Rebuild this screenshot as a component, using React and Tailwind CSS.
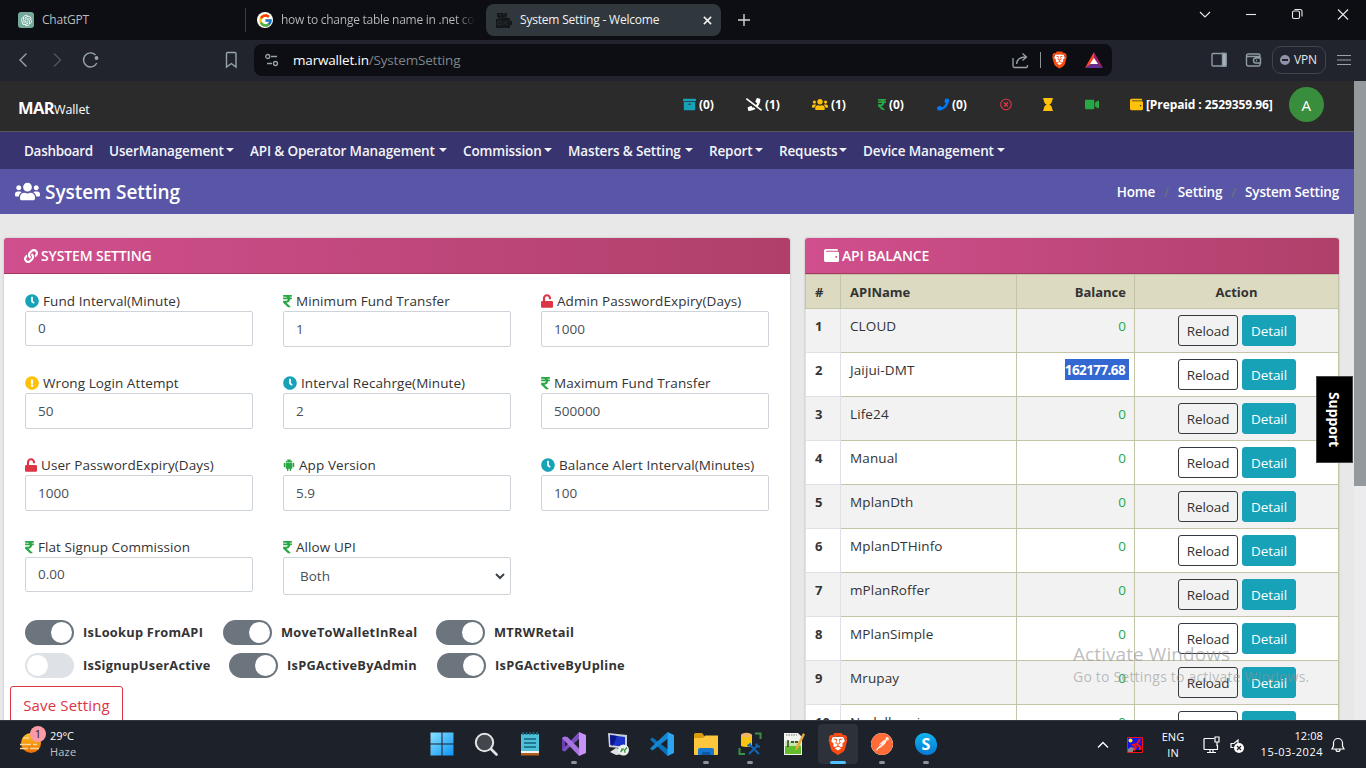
import React from "react";
import {
  FaArchive, FaPhoneSlash, FaUsers, FaRupeeSign, FaPhone, FaRegTimesCircle, FaHourglass, FaVideo,
  FaWallet, FaLink, FaClock, FaExclamationCircle, FaUnlock,
} from "react-icons/fa";
import { AiFillAndroid } from "react-icons/ai";
import { FcGoogle } from "react-icons/fc";
import { SiBrave, SiPostman } from "react-icons/si";
import { RiOpenaiFill } from "react-icons/ri";

/* ---------- Browser chrome ---------- */

function BraveLogo({ className }) {
  return (
    <span className={"relative flex items-center justify-center " + className}>
      <svg viewBox="0 0 24 24" className="absolute inset-0 h-full w-full">
        <path d="M6 4h12l2 6-2 8-6 4-6-4-2-8z" fill="#fff" />
      </svg>
      <SiBrave className="relative h-full w-full text-[#fb4a12]" />
    </span>
  );
}

function TabBar() {
  return (
    <div className="flex h-10 shrink-0 bg-[#0d0e13] text-[12px] leading-[40px] tracking-[-0.2px] whitespace-nowrap text-[#b9bbbe]">
      <div className="flex w-[246px] items-center pl-[18px]">
        <span className="flex h-4 w-4 items-center justify-center rounded-[3px] bg-[#74a99b] text-white">
          <RiOpenaiFill size={13} />
        </span>
        <span className="ml-2">ChatGPT</span>
        <span className="ml-auto h-6 w-px bg-[#3a3c42]" />
      </div>
      <div className="flex w-[240px] items-center pl-[11px]">
        <span className="flex h-4 w-4 shrink-0 items-center justify-center rounded-full bg-white">
          <FcGoogle size={15} />
        </span>
        <span className="ml-2 w-[194px] overflow-hidden bg-gradient-to-r from-[#b9bbbe] from-90% to-transparent bg-clip-text tracking-[-0.26px] text-transparent">
          how to change table name in .net core
        </span>
      </div>
      <div className="mt-1 flex h-8 w-[235px] items-center rounded-lg bg-[#30383d] pl-[10px] leading-8 text-[#f1f2f3]">
        <svg width="16" height="16" viewBox="0 0 16 16" fill="#14181b">
          <path d="M1 1h10v5h3v3h2v4h-2v3H0V7h2V5H1z" />
          <path d="M3 3h2M7 2h2M3 6h3M8 5h3M2 9v4h3V9zM8 9v4M9 11l3-2M9 11l3 2" fill="none" stroke="#262d31" />
        </svg>
        <span className="ml-2">System Setting - Welcome</span>
        <svg className="mr-[9px] ml-auto" width="9" height="9" viewBox="0 0 10 10" stroke="#f1f2f3" strokeWidth="1.7">
          <path d="M1 1l8 8M9 1l-8 8" />
        </svg>
      </div>
      <svg className="mt-[14px] ml-[17px]" width="12" height="12" viewBox="0 0 12 12" stroke="#d5d7d9" strokeWidth="1.4">
        <path d="M6 0v12M0 6h12" />
      </svg>
      <svg className="mt-[6px] ml-auto" width="160" height="18" viewBox="1194 0 160 18" fill="none" stroke="#e8e9ea" strokeWidth="1.1">
        <path d="M1200 6l5 5 5-5" />
        <path d="M1246 8.500h10" />
        <rect x="1292.500" y="5" width="7" height="7.500" rx="1.500" />
        <path d="M1294.500 3.500h5.500a2 2 0 0 1 2 2v5" />
        <path d="M1338 3.500l10 10M1348 3.500l-10 10" />
      </svg>
      <span className="w-3" />
    </div>
  );
}

function ToolBar() {
  return (
    <div className="flex h-[41px] shrink-0 items-center bg-[#21242c] pb-px whitespace-nowrap">
      <svg width="254" height="41" viewBox="0 0 254 41" fill="none" stroke="#98a4aa" strokeWidth="1.4">
        <path d="M26.500 13.500l-6.500 6.500 6.500 6.500" />
        <path d="M54 13.500l6.500 6.500-6.500 6.500" stroke="#50565d" />
        <path d="M95.500 15a7 7 0 1 0 1.300 8" />
        <circle cx="96.500" cy="18" r="1.900" fill="#98a4aa" stroke="none" />
        <path d="M226.500 13.500q0-1 1-1h7.500q1 0 1 1v13.500l-4.700-3.500-4.800 3.500z" />
      </svg>
      <div className="flex h-8 w-[858px] items-center rounded-lg bg-[#0d0e13] pl-[11px]">
        <svg width="14" height="14" viewBox="0 0 14 14" fill="none" stroke="#98a4aa" strokeWidth="1.3">
          <circle cx="2.700" cy="3.500" r="2" />
          <path d="M6 3.500h6M2 10.500h5" />
          <circle cx="10.500" cy="10.500" r="2" />
        </svg>
        <span className="ml-[14px] text-[13.500px] tracking-[-0.18px] text-[#7e858a]">
          <span className="text-white">marwallet.in</span>/SystemSetting
        </span>
        <svg className="ml-auto" width="17" height="17" viewBox="0 0 17 17" fill="none" stroke="#98a4aa" strokeWidth="1.3">
          <path d="M1 6v8q0 1.500 1.500 1.500h12q1 0 1-1.500v-1M4.500 12c.5-4.500 3-7 9-7M10.500 1.500l4 3.500-4 3.500" />
        </svg>
        <span className="ml-[11px] h-4 w-px bg-[#8b9196]" />
        <BraveLogo className="ml-[10px] h-[18px] w-[17px]" />
        <svg className="mr-[9px] ml-[17px]" width="18" height="16" viewBox="0 0 18 16">
          <path d="M9 0L0 16l9-5z" fill="#ff4724" />
          <path d="M9 0l9 16-9-5z" fill="#9e1f63" />
          <path d="M0 16h18L9 10z" fill="#662d91" />
          <path d="M9 6l4 6H5z" fill="#fff" />
        </svg>
      </div>
      <svg className="ml-[99px]" width="51" height="16" viewBox="0 0 51 16" fill="none" stroke="#8f9ba1" strokeWidth="1.4">
        <rect x="1" y="1.500" width="14" height="12.500" rx="1" />
        <path d="M11.500 1.500h3.500v12.500h-3.500z" fill="#a5b6bd" />
        <path d="M49 5V3.500q0-1.500-1.500-1.500h-10q-2 0-2 2v8q0 2 2 2h10q1.500 0 1.500-1.500V11M35.500 4.500h13.500M49.500 6h-4.500a2.500 2.500 0 0 0 0 5h4.500zM45 8.500h1" />
      </svg>
      <div className="ml-[10px] flex h-7 w-[54px] items-center rounded-[9px] border border-[#3d464c] pl-[7px]">
        <span className="flex h-[10px] w-[10px] items-center justify-center rounded-full bg-[#8f93aa]">
          <span className="h-[1.500px] w-[6px] bg-[#21242c]" />
        </span>
        <span className="ml-1 text-[12px] tracking-[-0.2px] text-[#e4e6e8]">VPN</span>
      </div>
      <svg className="ml-[11px]" width="14" height="12" viewBox="0 0 14 12" stroke="#98a4aa" strokeWidth="1.2">
        <path d="M0 1.500h14M0 6h14M0 10.500h14" />
      </svg>
    </div>
  );
}

/* ---------- Page header ---------- */

const stats = [
  { Icon: FaArchive, cls: "w-[63px]", icon: "text-[#17a2b8] w-[13px]", n: "(0)" },
  { Icon: FaPhoneSlash, cls: "w-[66px]", icon: "text-white w-4", n: "(1)" },
  { Icon: FaUsers, cls: "w-[66px]", icon: "text-[#ffc107] w-4", n: "(1)" },
  { Icon: FaRupeeSign, cls: "w-[59px]", icon: "text-[#28a745] w-2", n: "(0)" },
  { Icon: FaPhone, cls: "w-[63px]", icon: "text-[#007bff] w-3", n: "(0)" },
  { Icon: FaRegTimesCircle, cls: "w-[43px]", icon: "text-[#dc3545] w-[12px]" },
  { Icon: FaHourglass, cls: "w-[42px]", icon: "text-[#ffc107] w-[10px]" },
  { Icon: FaVideo, cls: "w-[45px]", icon: "text-[#28a745] w-[14px]" },
];

function SiteHeader() {
  return (
    <div className="flex h-[51px] shrink-0 border-b border-[#555] bg-[#2b2b2b] text-[12px] font-bold whitespace-nowrap text-white">
      <div className="flex w-[683px] items-baseline pt-[15px] pl-[18px] leading-6">
        <span className="w-[36px] text-[16.500px] font-bold tracking-[-0.6px]">MAR</span>
        <span className="text-[12.500px] font-normal tracking-[-0.1px]">Wallet</span>
      </div>
      {stats.map(({ Icon, cls, icon, n }, i) => (
        <div key={i} className={"flex h-[47px] shrink-0 items-center gap-[3px] " + cls}>
          <Icon className={"h-[13px] shrink-0 " + icon} />
          {n && <span className="tracking-[-0.1px]">{n}</span>}
        </div>
      ))}
      <div className="flex h-[47px] items-center">
        <FaWallet className="mr-[3px] h-[13px] w-[13px] text-[#ffc107]" />
        <span className="tracking-[-0.1px]">[Prepaid : 2529359.96]</span>
      </div>
      <div className="mt-[6px] ml-4 flex h-[35px] w-[35px] items-center justify-center rounded-full bg-[#388e3c] pt-px text-[15px] font-medium">
        A
      </div>
    </div>
  );
}

const menus = [
  ["UserManagement", "w-[125px]"],
  ["API & Operator Management", "w-[197px]"],
  ["Commission", "w-[89px]"],
  ["Masters & Setting", "w-[125px]"],
  ["Report", "w-[54px]"],
  ["Requests", "w-[68px]"],
  ["Device Management", "w-[142px]"],
];

function NavBar() {
  return (
    <div className="flex h-[37px] shrink-0 items-center gap-4 bg-[#37346f] pt-px pl-6 text-[13.500px] font-semibold tracking-[-0.14px] whitespace-nowrap text-[#f4f4f8]">
      <span className="w-[69px] tracking-[-0.3px]">Dashboard</span>
      {menus.map(([name, w]) => (
        <span key={name} className={"flex shrink-0 items-center justify-between " + w}>
          {name}
          <svg width="8" height="4" viewBox="0 0 8 4" fill="currentColor" className="-mt-[3px] shrink-0">
            <path d="M0 0h8L4 4z" />
          </svg>
        </span>
      ))}
    </div>
  );
}

function TitleBar() {
  return (
    <div className="flex h-[45px] shrink-0 items-center bg-[#5956a8] pt-px pr-[15px] pl-[15px] font-semibold whitespace-nowrap text-white">
      <FaUsers className="-mt-[2px] h-[25px] w-[25px]" />
      <span className="ml-[5px] text-[19px] tracking-[-0.05px]">System Setting</span>
      <span className="ml-auto flex items-center gap-[9px] text-[13.500px] tracking-[-0.18px]">
        <span>Home</span>
        <span className="font-normal text-[#6c757d]">/</span>
        <span>Setting</span>
        <span className="font-normal text-[#6c757d]">/</span>
        <span>System Setting</span>
      </span>
    </div>
  );
}

/* ---------- Settings form ---------- */

function CardHead({ icon, title, className }) {
  return (
    <div className={"flex h-9 shrink-0 items-center rounded-t-[3px] border-b border-[#a33a63] bg-gradient-to-r from-[#d04f8e] to-[#b0406a] text-[14px] font-semibold text-white " + className}>
      {icon}
      <span className="ml-[3px] tracking-[-0.15px]">{title}</span>
    </div>
  );
}

const clock = <FaClock className="h-[14px] w-[14px] text-[#17a2b8]" />;
const rupee = <FaRupeeSign className="h-[14px] w-[9px] text-[#28a745]" />;
const lock = <FaUnlock className="h-[14px] w-[12px] text-[#dc3545]" />;

const fields = [
  [clock, "Fund Interval(Minute)", "0", "h-[35px]"],
  [rupee, "Minimum Fund Transfer", "1", "h-9"],
  [lock, "Admin PasswordExpiry(Days)", "1000", "h-9"],
  [<FaExclamationCircle className="h-[14px] w-[14px] text-[#ffc107]" />, "Wrong Login Attempt", "50", "h-9"],
  [clock, "Interval Recahrge(Minute)", "2", "h-9"],
  [rupee, "Maximum Fund Transfer", "500000", "h-9"],
  [lock, "User PasswordExpiry(Days)", "1000", "h-9"],
  [<AiFillAndroid className="-mx-px h-[14px] w-[14px] text-[#28a745]" />, "App Version", "5.9", "h-9"],
  [clock, "Balance Alert Interval(Minutes)", "100", "h-9"],
  [rupee, "Flat Signup Commission", "0.00", "h-[35px]"],
];

function Label({ icon, children }) {
  return (
    <div className="flex h-5 items-center gap-1 text-[13.500px] font-medium tracking-[0.08px] whitespace-nowrap text-[#333]">
      {icon}
      <span>{children}</span>
    </div>
  );
}

function Toggle({ on, label, className }) {
  return (
    <div className={"flex shrink-0 items-center " + className}>
      <span className={"flex h-[25px] w-[49px] items-center rounded-full px-[2px] " + (on ? "justify-end bg-[#6c757d]" : "bg-[#dee2e6]")}>
        <span className="h-[21px] w-[21px] rounded-full bg-white" />
      </span>
      <span className="ml-[9px] text-[12.800px] font-bold tracking-[0.27px] whitespace-nowrap text-[#333]">{label}</span>
    </div>
  );
}

function SettingsCard() {
  return (
    <div className="h-[600px] w-[786px] shrink-0 rounded-[3px] bg-white shadow-[0_0_2px_rgba(0,0,0,0.25)]">
      <CardHead className="pl-5" icon={<FaLink className="h-[14px] w-[14px]" />} title="SYSTEM SETTING" />
      <div className="grid grid-cols-[repeat(3,228px)] gap-x-[30px] pt-[17px] pl-[21px]">
        {fields.map(([icon, label, value, h]) => (
          <div key={label} className="h-[82px]">
            <Label icon={icon}>{label}</Label>
            <div className={"flex items-center rounded-[2px] border border-[#ced4da] pl-3 text-[13.500px] text-[#495057] " + h}>{value}</div>
          </div>
        ))}
        <div className="h-[82px]">
          <Label icon={rupee}>Allow UPI</Label>
          <div className="flex h-[38px] items-center justify-between rounded-[2px] border border-[#ced4da] pt-px pr-[5px] pl-4 text-[13.500px] text-[#495057]">
            Both
            <svg width="10" height="7" viewBox="0 0 10 7" fill="none" stroke="#3c4248" strokeWidth="2">
              <path d="M1 1l4 4 4-4" />
            </svg>
          </div>
        </div>
      </div>
      <div className="mt-[1px] flex pl-[21px]">
        <Toggle on label="IsLookup FromAPI" className="w-[198px]" />
        <Toggle on label="MoveToWalletInReal" className="w-[213px]" />
        <Toggle on label="MTRWRetail" className="w-[160px]" />
      </div>
      <div className="mt-2 flex pl-[21px]">
        <Toggle label="IsSignupUserActive" className="w-[204px]" />
        <Toggle on label="IsPGActiveByAdmin" className="w-[208px]" />
        <Toggle on label="IsPGActiveByUpline" className="w-[200px]" />
      </div>
      <div className="mt-2 ml-[6px] flex h-[38px] w-[113px] items-center justify-center rounded-[3px] border border-[#dc3545] text-[15px] tracking-[0.15px] text-[#dc3545]">
        Save Setting
      </div>
    </div>
  );
}

/* ---------- Balance table ---------- */

const rows = [
  ["CLOUD", "0"], ["Jaijui-DMT", "162177.68"], ["Life24", "0"], ["Manual", "0"], ["MplanDth", "0"],
  ["MplanDTHinfo", "0"], ["mPlanRoffer", "0"], ["MPlanSimple", "0"], ["Mrupay", "0"], ["Nodalbami", "0"],
];

function BalanceCard() {
  return (
    <div className="h-[600px] w-[534px] shrink-0 rounded-[3px] bg-white shadow-[0_0_2px_rgba(0,0,0,0.25)]">
      <CardHead className="pl-[19px]" icon={<FaWallet className="h-[15px] w-[15px]" />} title="API BALANCE" />
      <div className="text-[13.500px] font-medium text-[#333]">
        <div className="grid h-[35px] grid-cols-[36px_176px_118px_204px] border-y border-[#c4c4a8] bg-[#dcdac1] text-[13px] leading-[34px] font-bold">
          <span className="border-x border-[#c4c4a8] pl-[9px]">#</span>
          <span className="border-r border-[#c4c4a8] pl-[9px]">APIName</span>
          <span className="border-r border-[#c4c4a8] pr-[8px] text-right">Balance</span>
          <span className="border-r border-[#c4c4a8] text-center">Action</span>
        </div>
        {rows.map(([name, bal], i) => (
          <div key={name} className={"grid h-[44px] grid-cols-[36px_176px_118px_204px] leading-[21px] " + (i % 2 ? "bg-white" : "bg-[#f2f2f2]")}>
            <span className="border-r border-b border-l border-[#dee2e6] pt-[7px] pl-[9px] text-[13px] font-bold">{i + 1}</span>
            <span className="border-r border-b border-[#c4c4a8] pt-[7px] pl-[9px] tracking-[0.12px]">{name}</span>
            <span className="flex items-start justify-end border-r border-b border-[#c4c4a8] pt-[7px] pr-[5px] font-semibold">
              {bal === "0" ? (
                <span className="pr-[3px] font-medium text-[#28a745]">0</span>
              ) : (
                <span className="-mt-px bg-[#3367d1] pt-px pr-[4px] leading-[20px] font-bold tracking-[-0.6px] text-white">{bal}</span>
              )}
            </span>
            <span className="flex justify-center gap-1 border-r border-b border-[#c4c4a8] pt-[6px] pl-px text-[13.500px] leading-[30px] font-normal tracking-[-0.1px]">
              <span className="h-[31px] w-[60px] rounded-[3px] border border-[#343a40] text-center">Reload</span>
              <span className="h-[31px] w-[54px] rounded-[3px] border border-[#17a2b8] bg-[#17a2b8] text-center text-white">Detail</span>
            </span>
          </div>
        ))}
      </div>
    </div>
  );
}

/* ---------- Taskbar ---------- */

const icons = {
  windows: (
    <svg width="24" height="24" viewBox="0 0 24 24">
      <defs>
        <linearGradient id="win" x1="0" y1="0" x2="1" y2="1">
          <stop stopColor="#8be1ff" /><stop offset="1" stopColor="#0b94f5" />
        </linearGradient>
      </defs>
      <path d="M.5.5h11v11H.5zM12.500.5h11v11h-11zM.5 12.500h11v11H.5zM12.500 12.500h11v11h-11z" fill="url(#win)" />
    </svg>
  ),
  search: (
    <svg width="24" height="24" viewBox="0 0 24 24" fill="none" stroke="#e3e4e6">
      <circle cx="10.500" cy="10.500" r="8.700" fill="#43474d" strokeWidth="2" />
      <path d="M17 17l5.500 5.500" strokeWidth="2.600" strokeLinecap="round" />
    </svg>
  ),
  notepad: (
    <svg width="20" height="24" viewBox="0 0 20 24">
      <path d="M1 2h18v18H1z" fill="#4fc0da" />
      <path d="M3 0v3M6.500 0v3M10 0v3M13.500 0v3M17 0v3" stroke="#1d6f88" strokeWidth="1.500" />
      <path d="M4 7h12M4 11h12M4 15h12" stroke="#12607c" strokeWidth="1.500" />
      <path d="M1 19h18v3H1z" fill="#f3f3f3" /><path d="M1 21h18v2.500H1z" fill="#b5601c" />
    </svg>
  ),
  vs: (
    <svg width="24" height="24" viewBox="0 0 24 24">
      <path d="M0 6l2.500-1.500L5 6v12l-2.500 1.500L0 18z" fill="#6b3fb0" />
      <path d="M2.500 19.500L0 18l17-18v7z" fill="#7a4fc0" />
      <path d="M2.500 4.500l3 .5L17 16.500V24L0 6z" fill="#a873e0" />
      <path d="M17 0l7 3v18l-7 3z" fill="#c792f5" />
      <path d="M3 9.500v5L5.500 12z" fill="#1d2129" />
    </svg>
  ),
  remote: (
    <svg width="24" height="24" viewBox="0 0 24 24">
      <path d="M2 1l19 2v14L3 15z" fill="#c9cdd4" /><path d="M4 3l15 2v10L4.500 13z" fill="#1b33c9" />
      <path d="M4 3l7 1-4 9.400-2.500-.4z" fill="#0a158a" />
      <path d="M4 20l6-4 6 2 2 4-8 1z" fill="#dfe1e4" />
      <circle cx="17.500" cy="18" r="5.500" fill="#eef0ee" /><path d="M14.500 20l2.500-3M18 19l3-3.500M15 17h3M18 20h2" stroke="#2f8b3c" strokeWidth="1.200" />
    </svg>
  ),
  code: (
    <svg width="24" height="24" viewBox="0 0 24 24">
      <path d="M0 7.500l2.500-2L18 17.500V24h-.5z" fill="#0b72b9" />
      <path d="M0 16.500L17.500 0 18 6.500 2.500 18.500z" fill="#1487d0" />
      <path d="M17.500 0L24 3v18l-6.500 3z" fill="#2ba5f2" />
    </svg>
  ),
  folder: (
    <svg width="24" height="22" viewBox="0 0 24 22">
      <path d="M0 1.500Q0 0 1.500 0H8l2 2.500V6H0z" fill="#d99a0b" />
      <path d="M0 5h9l2-2.500h13V21q0 1-1 1H1q-1 0-1-1z" fill="#fcc73c" />
      <path d="M4 22v-5q0-2 2-2h12q2 0 2 2v5z" fill="#1777cf" /><path d="M8 19h8v3H8z" fill="#0c5aa5" />
    </svg>
  ),
  ssms: (
    <svg width="24" height="24" viewBox="0 0 24 24">
      <path d="M3 3v11q5 2 11 0V3z" fill="#f7c411" /><ellipse cx="8.500" cy="3" rx="5.500" ry="2.200" fill="#eeb56a" />
      <path d="M17 1.500h5.500V7M1.500 16v6H7" fill="none" stroke="#3c8f45" strokeWidth="2" />
      <path d="M11 22l9-9M12 13l9 9M9.500 14l3.500-2.500M18.500 11.500v3h3.500" fill="none" stroke="#1464b4" strokeWidth="2" />
    </svg>
  ),
  notepadpp: (
    <svg width="24" height="24" viewBox="0 0 24 24">
      <path d="M2 1h14l4 4v18H2z" fill="#f2f4ef" /><path d="M3 12h16v10H3z" fill="#62bd2c" /><path d="M3 9h16v5H3z" fill="#c5e6a6" />
      <path d="M4 3h11" stroke="#777" strokeDasharray="1.500 1" /><path d="M6 8v7M9 10h3M13 10h3" stroke="#222" strokeWidth="1.300" />
      <path d="M21 1l-7 14-1 4 3-2.500 7-14z" fill="#eaa93a" />
    </svg>
  ),
  brave: <BraveLogo className="h-6 w-[22px]" />,
  postman: <SiPostman className="h-[22px] w-[22px] rounded-full bg-white text-[#ff6c37]" />,
  skype: (
    <span className="flex h-[22px] w-[22px] items-center justify-center rounded-[9px_12px_9px_12px] bg-gradient-to-b from-[#12b5ee] to-[#0a78d4] text-[16px] leading-none font-bold text-white">
      S
    </span>
  ),
};

const running = ["vs", "folder", "ssms", "postman", "skype"];

function TaskBar() {
  return (
    <div className="flex h-12 shrink-0 border-t border-[#34373c] bg-[#1d2129] text-white">
      <div className="flex w-[420px] pt-[5px] pl-[19px]">
        <div className="relative h-[30px] w-[30px]">
          <svg width="24" height="28" viewBox="0 0 24 28">
            <defs>
              <linearGradient id="sun" x1="0" y1="0" x2="0" y2="1">
                <stop stopColor="#ffc51e" /><stop offset="1" stopColor="#ea6c00" />
              </linearGradient>
            </defs>
            <circle cx="12" cy="17" r="10" fill="url(#sun)" />
            <path d="M4 12h6M1 18.500h11M14 18.500h4M1 22.500h8M11 22.500h9" stroke="#f9d79a" strokeWidth="1.500" />
          </svg>
          <span className="absolute top-0 left-[11px] flex h-4 w-4 items-center justify-center rounded-full bg-[#fc9aa6] text-[11px] text-[#222]">1</span>
        </div>
        <div className="ml-[1px] pt-[2px] text-[11px] leading-4 tracking-[-0.1px]">
          <div>29°C</div>
          <div className="tracking-[0.2px] text-[#bfc2c6]">Haze</div>
        </div>
      </div>
      {Object.keys(icons).map((k) => (
        <div key={k} className="flex w-11 shrink-0 justify-center pt-[3px]">
          <div className={"flex h-10 w-10 flex-col items-center rounded " + (k === "brave" ? "bg-[#2d313a]" : "")}>
            <span className="flex h-[37px] shrink-0 items-center pt-[3px]">{icons[k]}</span>
            {k === "brave" && <span className="h-[3px] w-4 shrink-0 rounded-full bg-[#4cc2ff]" />}
            {running.includes(k) && <span className="h-[3px] w-[6px] shrink-0 rounded-full bg-[#8f9296]" />}
          </div>
        </div>
      ))}
      <div className="ml-auto flex h-full items-center text-[11px] leading-4">
        <svg width="12" height="8" viewBox="0 0 12 8" fill="none" stroke="#fff" strokeWidth="1.400">
          <path d="M1 6.500l5-5 5 5" />
        </svg>
        <svg className="ml-[18px]" width="16" height="16" viewBox="0 0 16 16">
          <path d="M.5.5h15v15H.5z" fill="#1414e8" stroke="#f01414" />
          <circle cx="3.500" cy="3.500" r="2" fill="#ffef00" />
          <path d="M1 12l3-2 4 1v4H1z" fill="#888" /><path d="M6 13h9v2H6z" fill="#111" />
          <path d="M13 2l-3 5-4 1 3 2-2 4M10 7l3 3v3" fill="none" stroke="#f01414" strokeWidth="2" />
        </svg>
        <div className="ml-[17px] w-[26px] text-center tracking-[0.1px]">
          <div>ENG</div>
          <div>IN</div>
        </div>
        <svg className="ml-[17px]" width="43" height="18" viewBox="0 0 43 18" fill="none" stroke="#fff" strokeWidth="1.200">
          <path d="M11 2.500H2q-1 0-1 1v9q0 1 1 1h12.500V9M4 16.500h9M7 13.500v3M10 13.500v3" />
          <path d="M12 1h4v5h-4zM14 6v4" />
          <path d="M35 8V4l-4 3.500h-3v4h2.500" />
          <circle cx="36" cy="12" r="5" fill="#fff" stroke="none" />
          <path d="M34 10l4 4M38 10l-4 4" stroke="#1d2129" />
        </svg>
        <div className="-mt-px ml-[7px] w-[70px] text-right">
          <div className="tracking-[0.1px]">12:08</div>
          <div className="tracking-[0.500px] whitespace-nowrap">15-03-2024</div>
        </div>
        <svg className="mr-[21px] ml-[8px]" width="14" height="16" viewBox="0 0 14 16" fill="none" stroke="#fff" strokeWidth="1.200">
          <path d="M1 12h12l-1.500-3V6a4.500 4.500 0 0 0-9 0v3zM5 12.500a2 2 0 0 0 4 0" />
        </svg>
      </div>
    </div>
  );
}

export default function App() {
  return (
    <div className="relative flex h-[768px] w-[1366px] flex-col overflow-hidden font-['Open_Sans','Noto_Sans',sans-serif]">
      <TabBar />
      <ToolBar />
      <div className="flex h-[639px] shrink-0 overflow-hidden">
        <div className="flex w-[1354px] flex-col bg-[#e8e8e8]">
          <SiteHeader />
          <NavBar />
          <TitleBar />
          <div className="flex gap-[15px] pt-6 pl-1">
            <SettingsCard />
            <BalanceCard />
          </div>
        </div>
        <div className="w-3 bg-[#ececee]">
          <div className="h-[405px] bg-[#94999d]" />
        </div>
      </div>
      <TaskBar />
      <div className="absolute top-[376px] left-[1316px] flex h-[87px] w-[37px] items-center justify-center border border-[#444] bg-black text-[14px] font-bold tracking-[-0.1px] text-white [writing-mode:vertical-rl]">
        Support
      </div>
      <div className="absolute top-[641px] left-[1073px] whitespace-nowrap text-[#929292]/60">
        <div className="text-[19px] leading-[26px] tracking-[0.08px]">Activate Windows</div>
        <div className="text-[14px] leading-[20px] tracking-[0.200px]">Go to Settings to activate Windows.</div>
      </div>
    </div>
  );
}
